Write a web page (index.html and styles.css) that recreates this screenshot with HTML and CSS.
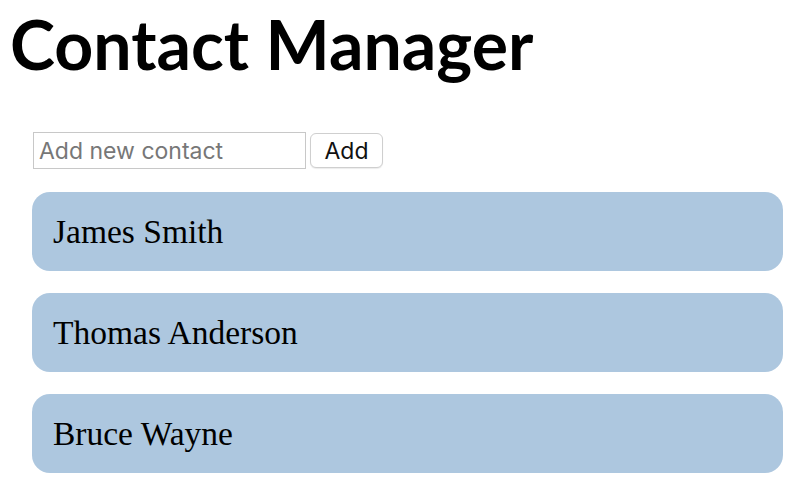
FILE: index.html
```html
<!DOCTYPE html>
<html>
<head>
<meta charset="utf-8">
<link rel="stylesheet" href="styles.css">
</head>
<body>
<h1 class="title">Contact Manager</h1>
<div class="app">
  <form class="add-form">
    <input class="add-input" type="text" placeholder="Add new contact">
    <button class="add-btn" type="button">Add</button>
  </form>
  <ul class="contacts">
    <li class="contact">James Smith</li>
    <li class="contact">Thomas Anderson</li>
    <li class="contact">Bruce Wayne</li>
  </ul>
</div>
</body>
</html>
```

FILE: styles.css
```css
html, body {
  margin: 0;
  padding: 0;
  background: #fff;
}
body {
  padding: 0 8px 8px;
  font-family: "Liberation Serif", serif;
}
.title {
  margin: 4px 0 0;
  padding-left: 2px;
  font-family: Lato, "Liberation Sans", sans-serif;
  font-weight: 700;
  font-size: 68px;
  line-height: 80px;
  color: #000;
}
.app {
  padding: 48px 17px 0 24px;
}
.add-form {
  display: flex;
  align-items: center;
  gap: 4px;
  margin: 0 0 23px 1px;
}
.add-input {
  box-sizing: border-box;
  width: 273px;
  height: 37px;
  border: 1px solid #c8c8c8;
  border-radius: 0;
  padding: 0 5px;
  font-family: Inter, "Liberation Sans", sans-serif;
  font-size: 23px;
  color: #222;
  outline: none;
}
.add-input::placeholder {
  color: #777;
}
.add-btn {
  box-sizing: border-box;
  width: 73px;
  height: 35px;
  border: 1px solid #cfcfcf;
  border-radius: 6px;
  background: #fff;
  box-shadow: 0 1px 1px rgba(0,0,0,0.08);
  font-family: Inter, "Liberation Sans", sans-serif;
  font-size: 23px;
  color: #111;
  padding: 0;
}
.contacts {
  list-style: none;
  margin: 0;
  padding: 0;
  display: flex;
  flex-direction: column;
  gap: 22px;
}
.contact {
  box-sizing: border-box;
  height: 79px;
  display: flex;
  align-items: center;
  padding-left: 21px;
  background: #adc7df;
  border-radius: 18px;
  font-family: "Liberation Serif", serif;
  font-size: 33.5px;
  color: #000;
}
```
